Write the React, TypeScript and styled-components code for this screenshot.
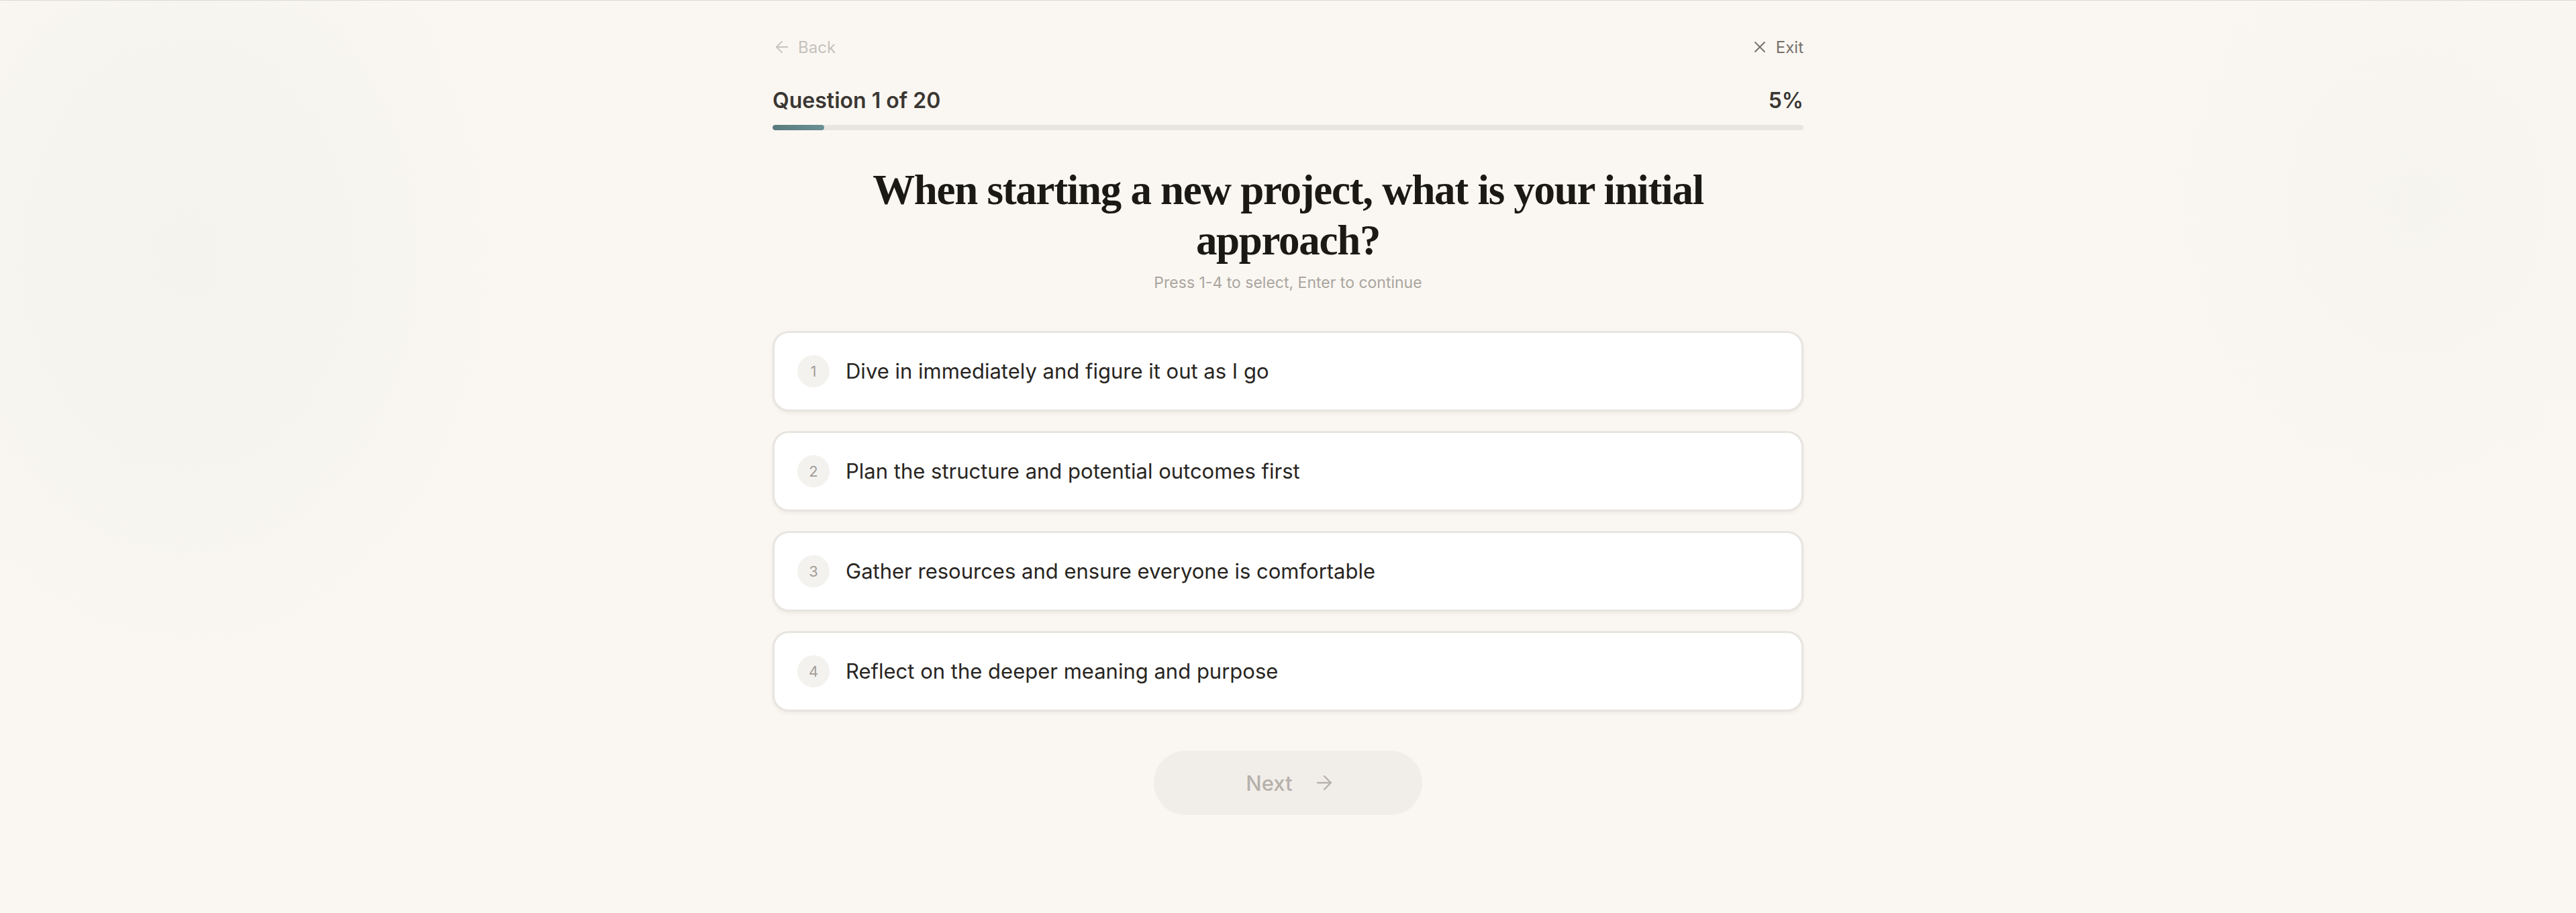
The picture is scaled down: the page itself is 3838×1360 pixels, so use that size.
import { useState } from 'react';
import styled, { createGlobalStyle } from 'styled-components';
import { ArrowLeft, ArrowRight, X } from 'lucide-react';

const GlobalStyle = createGlobalStyle`
  html, body {
    margin: 0;
    padding: 0;
  }
  body {
    background: #faf7f2;
    font-family: Inter, "Noto Sans", "Liberation Sans", sans-serif;
    -webkit-font-smoothing: antialiased;
  }
  * {
    box-sizing: border-box;
  }
`;

const options = [
  'Dive in immediately and figure it out as I go',
  'Plan the structure and potential outcomes first',
  'Gather resources and ensure everyone is comfortable',
  'Reflect on the deeper meaning and purpose',
];

const App = () => {
  const [selected, setSelected] = useState<number | null>(null);
  const current = 1;
  const total = 20;
  const percent = Math.round((current / total) * 100);

  return (
    <Page>
      <GlobalStyle />
      <Container>
        <TopBar>
          <NavButton disabled>
            <ArrowLeft size={28} strokeWidth={1.6} />
            Back
          </NavButton>
          <NavButton>
            <X size={28} strokeWidth={1.6} />
            Exit
          </NavButton>
        </TopBar>

        <Progress>
          <ProgressLabels>
            <span>Question {current} of {total}</span>
            <span>{percent}%</span>
          </ProgressLabels>
          <Track>
            <Fill style={{ width: `${percent}%` }} />
          </Track>
        </Progress>

        <Heading>When starting a new project, what is your initial approach?</Heading>
        <Hint>Press 1-4 to select, Enter to continue</Hint>

        <OptionList>
          {options.map((text, i) => (
            <OptionCard key={text} active={selected === i} onClick={() => setSelected(i)}>
              <Num>{i + 1}</Num>
              <OptionText>{text}</OptionText>
            </OptionCard>
          ))}
        </OptionList>

        <Footer>
          <NextButton disabled={selected === null}>
            Next
            <ArrowRight size={34} strokeWidth={1.6} />
          </NextButton>
        </Footer>
      </Container>
    </Page>
  );
};

export default App;

const Page = styled.div`
  min-height: 100vh;
  border-top: 1px solid #dddad4;
  background:
    radial-gradient(ellipse 700px 900px at 280px 380px, rgba(238, 239, 234, 0.55), rgba(238, 239, 234, 0) 70%),
    radial-gradient(ellipse 600px 700px at 3600px 300px, rgba(242, 241, 236, 0.4), rgba(242, 241, 236, 0) 70%),
    #faf7f2;
`;

const Container = styled.div`
  width: 1536px;
  margin: 0 auto;
  padding-top: 53px;
`;

const TopBar = styled.div`
  display: flex;
  justify-content: space-between;
  align-items: center;
  height: 32px;
`;

const NavButton = styled.button`
  display: flex;
  align-items: center;
  gap: 10px;
  padding: 0;
  border: none;
  background: none;
  font-family: Inter, "Liberation Sans", sans-serif;
  font-size: 24px;
  color: ${({ disabled }) => (disabled ? '#c6c2bc' : '#76716a')};
  cursor: ${({ disabled }) => (disabled ? 'default' : 'pointer')};
`;

const Progress = styled.div`
  margin-top: 42px;
`;

const ProgressLabels = styled.div`
  display: flex;
  justify-content: space-between;
  align-items: center;
  font-size: 32px;
  line-height: 44px;
  font-weight: 600;
  color: #3b3733;
`;

const Track = styled.div`
  margin-top: 14px;
  height: 8px;
  border-radius: 999px;
  background: #e9e6e1;
  overflow: hidden;
`;

const Fill = styled.div`
  height: 100%;
  border-radius: 999px;
  background: linear-gradient(90deg, #587a7d, #6a9093);
`;

const Heading = styled.h1`
  max-width: 1300px;
  margin: 52px auto 0;
  text-align: center;
  font-family: "Liberation Serif", "DejaVu Serif", serif;
  font-weight: 700;
  font-size: 63px;
  line-height: 75px;
  letter-spacing: -1.3px;
  color: #1b1916;
`;

const Hint = styled.p`
  margin: 9px 0 0;
  text-align: center;
  font-size: 23px;
  line-height: 32px;
  color: #aaa59f;
`;

const OptionList = styled.div`
  margin-top: 56px;
  display: flex;
  flex-direction: column;
  gap: 29px;
`;

const OptionCard = styled.div<{ active: boolean }>`
  display: flex;
  align-items: center;
  gap: 24px;
  padding: 33px 34px;
  background: #ffffff;
  border: 3px solid ${({ active }) => (active ? '#6a9093' : '#e8e5e1')};
  border-radius: 24px;
  box-shadow: 0 3px 5px rgba(60, 50, 40, 0.06);
  cursor: pointer;
`;

const Num = styled.span`
  flex: none;
  display: flex;
  align-items: center;
  justify-content: center;
  width: 48px;
  height: 48px;
  border-radius: 50%;
  background: #f4f2ef;
  font-size: 22px;
  color: #a29e98;
`;

const OptionText = styled.span`
  font-size: 31px;
  line-height: 48px;
  color: #282522;
`;

const Footer = styled.div`
  margin-top: 58px;
  display: flex;
  justify-content: center;
`;

const NextButton = styled.button`
  display: flex;
  align-items: center;
  justify-content: center;
  gap: 30px;
  width: 400px;
  height: 96px;
  border: none;
  border-radius: 999px;
  background: #f1eeea;
  font-family: Inter, "Liberation Sans", sans-serif;
  font-size: 31px;
  font-weight: 500;
  color: #b6b1ab;
  padding: 0 0 0 8px;
`;
